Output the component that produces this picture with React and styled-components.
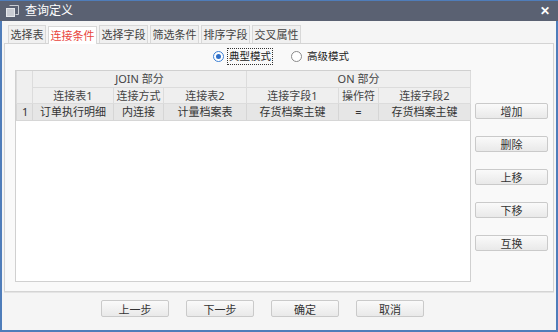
import React, { useState } from "react";
import styled, { createGlobalStyle } from "styled-components";

const GlobalStyle = createGlobalStyle`
  html, body {
    margin: 0;
    padding: 0;
    background: #ffffff;
  }
  * {
    box-sizing: border-box;
  }
`;

const tabs = ["选择表", "连接条件", "选择字段", "筛选条件", "排序字段", "交叉属性"];
const sideActions = ["增加", "删除", "上移", "下移", "互换"];
const footerActions = ["上一步", "下一步", "确定", "取消"];

const colWidths = [16, 81, 50, 83, 92, 40, 92];
const subHeads = ["连接表1", "连接方式", "连接表2", "连接字段1", "操作符", "连接字段2"];

const rows = [["订单执行明细", "内连接", "计量档案表", "存货档案主键", "=", "存货档案主键"]];

const Window = styled.div`
  width: 558px;
  height: 332px;
  display: flex;
  flex-direction: column;
  background: #f5f5f5;
  border: 2px solid #4f7dba;
  border-top: 1px solid #4f7dba;
  font-family: "Noto Sans", "Noto Sans CJK SC", sans-serif;
  font-size: 11px;
  color: #333;
`;

const TitleBar = styled.div`
  height: 20px;
  margin: 0 -2px;
  padding: 0 8px 0 6px;
  display: flex;
  align-items: center;
  gap: 6px;
  background: #5a6172;
  color: #fff;
  font-size: 12px;
`;

const TitleText = styled.span`
  flex: 1;
  line-height: 20px;
`;

const Close = styled.span`
  font-size: 12px;
  font-weight: bold;
  line-height: 1;
`;

const Body = styled.div`
  flex: 1;
  display: flex;
  flex-direction: column;
  padding: 4px 2px 0 2px;
`;

const TabStrip = styled.div`
  display: flex;
  gap: 2px;
  padding-left: 4px;
  height: 18px;
  align-items: flex-end;
`;

const Tab = styled.div`
  height: 18px;
  padding: 0 1.5px;
  display: flex;
  align-items: center;
  border: 1px solid #d8d8d8;
  border-bottom: none;
  background: ${(p) => (p.$active ? "#ffffff" : "#f0f0f0")};
  color: ${(p) => (p.$active ? "#e8453c" : "#444")};
  line-height: 16px;
  margin-bottom: ${(p) => (p.$active ? "-1px" : "0")};
  position: relative;
  z-index: ${(p) => (p.$active ? 1 : 0)};
`;

const Panel = styled.div`
  height: 249px;
  display: flex;
  flex-direction: column;
  border: 1px solid #d4d4d4;
  box-shadow: 0 1px 0 #e4e4e4;
  background: #f9f9f9;
  padding: 3px 4px 0 10px;
`;

const ModeRow = styled.div`
  height: 19px;
  display: flex;
  justify-content: center;
  align-items: center;
  gap: 18px;
`;

const RadioLabel = styled.label`
  display: flex;
  align-items: center;
  gap: 3px;
  cursor: pointer;
`;

const RadioDot = styled.span`
  width: 11px;
  height: 11px;
  border-radius: 50%;
  border: 1px solid ${(p) => (p.$on ? "#3b7fd4" : "#8a8a8a")};
  background: #fff;
  display: flex;
  align-items: center;
  justify-content: center;
  &::after {
    content: "";
    width: 5px;
    height: 5px;
    border-radius: 50%;
    background: ${(p) => (p.$on ? "#2f6fc8" : "transparent")};
  }
`;

const RadioText = styled.span`
  font-size: 10.5px;
  line-height: 15px;
  padding: 0 1px;
  border: 1px dotted ${(p) => (p.$focus ? "#333" : "transparent")};
  color: #222;
`;

const MainRow = styled.div`
  display: flex;
  gap: 4px;
  margin-top: 4px;
`;

const GridBox = styled.div`
  width: 456px;
  height: 212px;
  background: #fff;
  border: 1px solid #d0d0d0;
`;

const Table = styled.table`
  border-collapse: collapse;
  table-layout: fixed;
  width: 454px;
`;

const HeadCell = styled.th`
  font-weight: normal;
  height: 16px;
  padding: 0;
  background: #efefef;
  border: 1px solid #dcdcdc;
  border-top: none;
  color: #444;
  text-align: center;
  line-height: 15px;
  white-space: nowrap;
  overflow: hidden;
`;

const DataCell = styled.td`
  height: 17px;
  padding: 0;
  background: #e6e6e6;
  border: 1px solid #d6d6d6;
  text-align: ${(p) => (p.$index ? "left" : "center")};
  padding-left: ${(p) => (p.$index ? "5px" : "0")};
  color: #333;
  line-height: 16px;
  white-space: nowrap;
  overflow: hidden;
`;

const SideColumn = styled.div`
  display: flex;
  flex-direction: column;
  gap: 17px;
  padding-top: 33px;
`;

const Button = styled.button`
  width: ${(p) => p.$w}px;
  height: ${(p) => p.$h}px;
  padding: 0;
  border: 1px solid #cacaca;
  border-radius: 2px;
  background: linear-gradient(#fafafa, #e9e9e9);
  font-family: "Noto Sans CJK SC", sans-serif;
  font-size: 11px;
  line-height: 14px;
  color: #333;
  cursor: pointer;
`;

const Footer = styled.div`
  flex: 1;
  display: flex;
  gap: 17px;
  padding: 8px 0 0 97px;
`;

function Radio({ on, focus, children, onPick }) {
  return (
    <RadioLabel onClick={onPick}>
      <RadioDot $on={on} />
      <RadioText $focus={focus}>{children}</RadioText>
    </RadioLabel>
  );
}

function WindowIcon() {
  return (
    <svg width="13" height="13" viewBox="0 0 13 13">
      <rect x="0.5" y="3.5" width="8" height="8" fill="#c9ccd3" stroke="#e6e8ec" />
      <path d="M3.5 0.5h9v9h-3" fill="none" stroke="#c9ccd3" />
    </svg>
  );
}

export default function App() {
  const [mode, setMode] = useState("typical");
  return (
    <>
      <GlobalStyle />
      <Window>
        <TitleBar>
          <WindowIcon />
          <TitleText>查询定义</TitleText>
          <Close>✕</Close>
        </TitleBar>
        <Body>
          <TabStrip>
            {tabs.map((t) => (
              <Tab key={t} $active={t === "连接条件"}>
                {t}
              </Tab>
            ))}
          </TabStrip>
          <Panel>
            <ModeRow>
              <Radio on={mode === "typical"} focus onPick={() => setMode("typical")}>
                典型模式
              </Radio>
              <Radio on={mode === "advanced"} onPick={() => setMode("advanced")}>
                高级模式
              </Radio>
            </ModeRow>
            <MainRow>
              <GridBox>
                <Table>
                  <colgroup>
                    {colWidths.map((w, i) => (
                      <col key={i} style={{ width: w }} />
                    ))}
                  </colgroup>
                  <thead>
                    <tr>
                      <HeadCell rowSpan={2} />
                      <HeadCell colSpan={3}>JOIN 部分</HeadCell>
                      <HeadCell colSpan={3}>ON 部分</HeadCell>
                    </tr>
                    <tr>
                      {subHeads.map((h) => (
                        <HeadCell key={h}>{h}</HeadCell>
                      ))}
                    </tr>
                  </thead>
                  <tbody>
                    {rows.map((r, i) => (
                      <tr key={i}>
                        <DataCell $index>{i + 1}</DataCell>
                        {r.map((c, j) => (
                          <DataCell key={j}>{c}</DataCell>
                        ))}
                      </tr>
                    ))}
                  </tbody>
                </Table>
              </GridBox>
              <SideColumn>
                {sideActions.map((a) => (
                  <Button key={a} $w={73} $h={16}>
                    {a}
                  </Button>
                ))}
              </SideColumn>
            </MainRow>
          </Panel>
          <Footer>
            {footerActions.map((a) => (
              <Button key={a} $w={68} $h={17}>
                {a}
              </Button>
            ))}
          </Footer>
        </Body>
      </Window>
    </>
  );
}
